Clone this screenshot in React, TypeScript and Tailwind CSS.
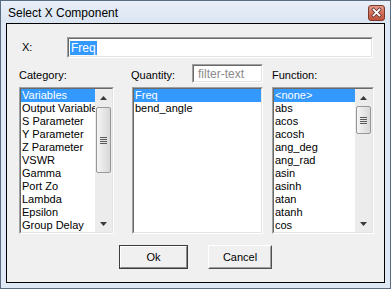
import React from "react";

const categories = [
  "Variables",
  "Output Variable",
  "S Parameter",
  "Y Parameter",
  "Z Parameter",
  "VSWR",
  "Gamma",
  "Port Zo",
  "Lambda",
  "Epsilon",
  "Group Delay",
];

const quantities = ["Freq", "bend_angle"];

const functions = [
  "<none>",
  "abs",
  "acos",
  "acosh",
  "ang_deg",
  "ang_rad",
  "asin",
  "asinh",
  "atan",
  "atanh",
  "cos",
];

function Sunken({ className, children }: { className: string; children: React.ReactNode }) {
  return (
    <div className={`border border-t-[#a0a0a0] border-l-[#a0a0a0] border-r-white border-b-white ${className}`}>
      <div className="h-full w-full border border-t-[#696969] border-l-[#696969] border-r-[#e3e3e3] border-b-[#e3e3e3] bg-white overflow-hidden">
        {children}
      </div>
    </div>
  );
}

function ScrollBar({ thumbTop, thumbHeight }: { thumbTop: number; thumbHeight: number }) {
  return (
    <div className="w-[17px] h-full flex flex-col bg-[#ececec] shrink-0">
      <div className="h-[17px] flex items-center justify-center">
        <svg width="7" height="4" viewBox="0 0 7 4">
          <path d="M3.5 0 L7 4 L0 4 Z" fill="#3a3a3a" />
        </svg>
      </div>
      <div className="flex-1 relative">
        <div
          className="absolute left-[1px] w-[15px] rounded-[2px] border border-[#979797] bg-gradient-to-r from-[#f5f5f5] to-[#d8d8d8] flex flex-col items-center justify-center gap-[1px]"
          style={{ top: thumbTop, height: thumbHeight }}
        >
          <div className="w-[7px] h-[1px] bg-[#5a5a5a]" />
          <div className="w-[7px] h-[1px] bg-[#5a5a5a]" />
          <div className="w-[7px] h-[1px] bg-[#5a5a5a]" />
          <div className="w-[7px] h-[1px] bg-[#5a5a5a]" />
        </div>
      </div>
      <div className="h-[17px] flex items-center justify-center">
        <svg width="7" height="4" viewBox="0 0 7 4">
          <path d="M0 0 L7 0 L3.5 4 Z" fill="#3a3a3a" />
        </svg>
      </div>
    </div>
  );
}

function ListRows({ items }: { items: string[] }) {
  return (
    <div className="flex-1 min-w-0 flex flex-col">
      {items.map((item, i) => (
        <div
          key={item}
          className={`h-[13px] leading-[13px] pl-[1px] whitespace-nowrap overflow-hidden ${
            i === 0 ? "bg-[#3399ff] text-white" : "text-black"
          }`}
        >
          {item}
        </div>
      ))}
    </div>
  );
}

export default function App() {
  return (
    <div className="w-[391px] h-[289px] border border-[#5b6b80] bg-[#dfe9f5] flex flex-col font-['Liberation_Sans',Arial,sans-serif] text-[11px] text-black select-none">
      {/* title bar */}
      <div className="h-[22px] flex items-start justify-between pl-[7px] pr-[5px] bg-gradient-to-b from-[#e8eff8] to-[#dbe6f3]">
        <span className="text-[12px] leading-[22px] pt-[1px] text-black">Select X Component</span>
        <div className="mt-[4px]">
          <svg width="17" height="16" viewBox="0 0 17 16">
            <defs>
              <linearGradient id="cb" x1="0" y1="0" x2="0" y2="1">
                <stop offset="0" stopColor="#e8a090" />
                <stop offset="0.45" stopColor="#d4725e" />
                <stop offset="1" stopColor="#c0503a" />
              </linearGradient>
            </defs>
            <rect x="0.5" y="0.5" width="16" height="15" rx="2.5" fill="url(#cb)" stroke="#7a3a2e" />
            <path d="M5.5 4.5 L11.5 10.5 M11.5 4.5 L5.5 10.5" stroke="#5a2a22" strokeWidth="3.2" strokeLinecap="square" />
            <path d="M5.5 4.5 L11.5 10.5 M11.5 4.5 L5.5 10.5" stroke="#ffffff" strokeWidth="1.8" strokeLinecap="square" />
          </svg>
        </div>
      </div>

      {/* body */}
      <div className="flex-1 px-[5px] pb-[5px] flex">
        <div className="flex-1 border border-black bg-[#f0f0f0] flex flex-col">
          {/* X row */}
          <div className="mt-[13px] h-[21px] flex items-center">
            <span className="pl-[15px] w-[60px]">X:</span>
            <Sunken className="w-[306px] h-[21px]">
              <div className="h-full flex items-center pl-[1px]">
                <span className="bg-[#3399ff] text-white leading-[14px] px-[1px] text-[12px]">Freq</span>
              </div>
            </Sunken>
          </div>

          {/* columns */}
          <div className="mt-[6px] flex pl-[12px]">
            <div className="w-[95px] flex flex-col">
              <div className="h-[19px] pt-[4px] leading-[14px]">Category:</div>
              <Sunken className="mt-[4px] h-[147px]">
                <div className="h-full flex">
                  <ListRows items={categories} />
                  <ScrollBar thumbTop={1} thumbHeight={66} />
                </div>
              </Sunken>
            </div>

            <div className="ml-[18px] w-[131px] flex flex-col">
              <div className="h-[19px] flex justify-between">
                <span className="pt-[4px] leading-[14px] -ml-[1px]">Quantity:</span>
                <Sunken className="w-[71px] h-[19px]">
                  <div className="h-full flex items-center pl-[4px] text-[#8a8a8a] text-[12px]">filter-text</div>
                </Sunken>
              </div>
              <Sunken className="mt-[4px] h-[147px]">
                <div className="h-full flex">
                  <ListRows items={quantities} />
                </div>
              </Sunken>
            </div>

            <div className="ml-[9px] w-[102px] flex flex-col">
              <div className="h-[19px] pt-[4px] leading-[14px]">Function:</div>
              <Sunken className="mt-[4px] h-[147px]">
                <div className="h-full flex">
                  <ListRows items={functions} />
                  <ScrollBar thumbTop={0} thumbHeight={28} />
                </div>
              </Sunken>
            </div>
          </div>

          {/* buttons */}
          <div className="mt-[11px] flex pl-[112px] gap-[20px]">
            <button className="w-[69px] h-[24px] border border-[#3c3c3c] bg-[#f0f0f0] p-0">
              <div className="h-full w-full border border-t-white border-l-white border-r-[#8a8a8a] border-b-[#8a8a8a] flex items-center justify-center">
                Ok
              </div>
            </button>
            <button className="w-[64px] h-[24px] border border-t-white border-l-white border-r-[#505050] border-b-[#505050] bg-[#f0f0f0] p-0">
              <div className="h-full w-full border border-t-[#f0f0f0] border-l-[#f0f0f0] border-r-[#a0a0a0] border-b-[#a0a0a0] flex items-center justify-center">
                Cancel
              </div>
            </button>
          </div>
        </div>
      </div>
    </div>
  );
}
